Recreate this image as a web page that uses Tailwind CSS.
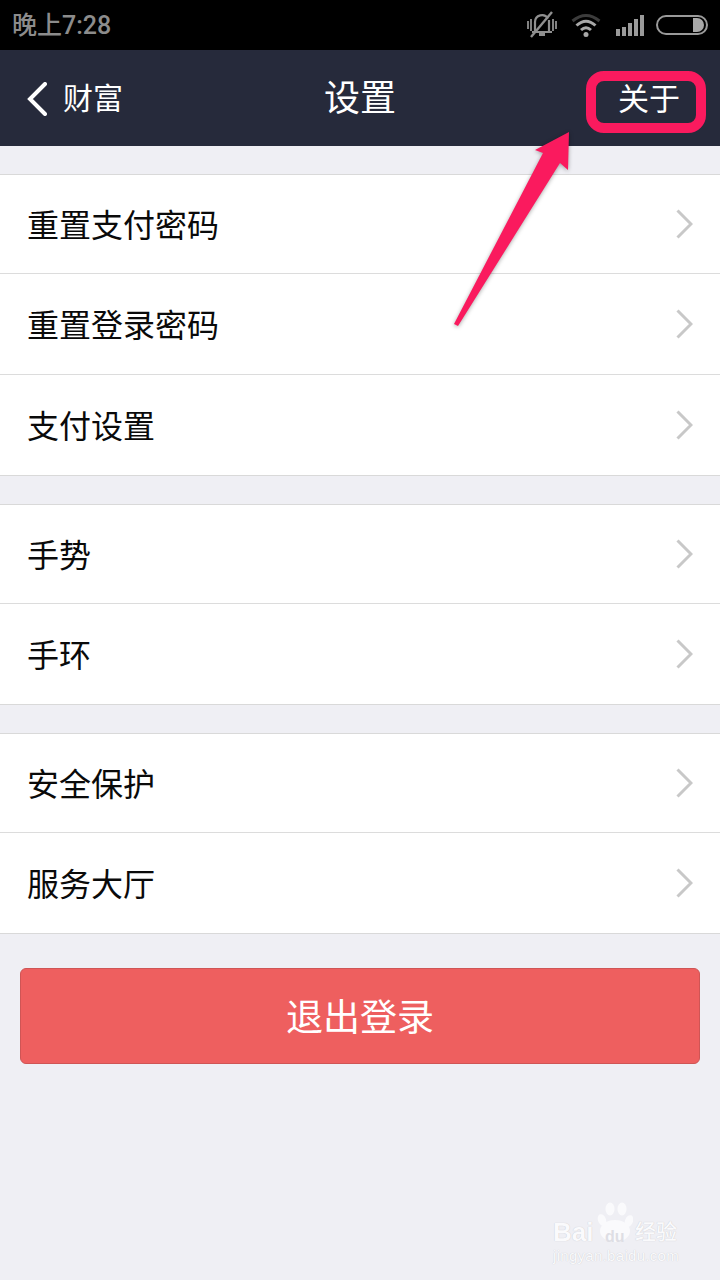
<!DOCTYPE html>
<html lang="zh-CN">
<head>
<meta charset="utf-8">
<script src="https://cdn.jsdelivr.net/npm/@tailwindcss/browser@4"></script>
</head>
<body class="m-0">
<div class="relative w-[720px] h-[1280px] overflow-hidden bg-[#efeff4] font-['Roboto','Noto_Sans_CJK_SC',sans-serif] text-[#0a0a0a]">

  <!-- status bar -->
  <div class="h-[50px] bg-black flex items-center justify-between pl-[12px] pr-[12px]">
    <span class="text-[25px] font-medium leading-none text-[#8c8c8c]">晚上7:28</span>
    <div class="flex items-center">
      <svg class="w-[30px] h-[28px] mr-[14px]" viewBox="0 0 30 28" fill="none" stroke="#8f8f8f" stroke-width="2.2">
        <path d="M8 20 V11 a7 7 0 0 1 13-3.500 M22 9 V20 M5 21 H25" />
        <path d="M12 23.500 h6" stroke-width="3" />
        <path d="M4 26 L25 1" stroke-width="2.400" />
        <path d="M1 10 v8 M4 8 v12 M26 8 v12 M29 10 v8" stroke-width="1.800" />
      </svg>
      <svg class="w-[30px] h-[25px] mr-[15px]" viewBox="0 0 30 25" fill="none" stroke-width="3">
        <path d="M1.500 8 Q15 -3 28.500 8" stroke="#3c3c3c" />
        <path d="M5.500 12.500 Q15 4 24.500 12.500" stroke="#a8a8a8" />
        <path d="M10 17 Q15 12.500 20 17" stroke="#a8a8a8" />
        <circle cx="15" cy="21.500" r="2.500" fill="#a8a8a8" stroke="none" />
      </svg>
      <div class="flex items-end gap-[2px] h-[22px] mr-[12px]">
        <div class="w-[4px] h-[7px] bg-[#9a9a9a]"></div>
        <div class="w-[4px] h-[9px] bg-[#9a9a9a]"></div>
        <div class="w-[4px] h-[13px] bg-[#9a9a9a]"></div>
        <div class="w-[4px] h-[17px] bg-[#9a9a9a]"></div>
        <div class="w-[4px] h-[21px] bg-[#9a9a9a]"></div>
      </div>
      <div class="w-[52px] h-[20px] rounded-full border-[2px] border-[#9a9a9a] flex justify-end items-center pr-[2px]">
        <div class="w-[11px] h-[14px] bg-[#a8a8a8] rounded-r-full"></div>
      </div>
    </div>
  </div>

  <!-- nav -->
  <div class="relative h-[96px] bg-[#262a3b] flex items-center justify-between pl-[27px] pr-[40px] pt-[2px] text-white">
    <div class="flex items-center">
      <svg class="w-[20px] h-[34px] mr-[16px]" viewBox="0 0 20 34" fill="none" stroke="#fff" stroke-width="4" stroke-linecap="round" stroke-linejoin="miter">
        <path d="M18 2 L3 17 L18 32" />
      </svg>
      <span class="text-[30px] leading-none font-normal">财富</span>
    </div>
    <span class="absolute left-0 right-0 text-center text-[36px] leading-none font-normal">设置</span>
    <span class="text-[31px] leading-none font-normal">关于</span>
  </div>

  <!-- group 1 -->
  <div class="mt-[28px] bg-white border-y border-[#d9d9d9]">
    <div class="h-[99px] flex items-center justify-between pl-[27px] pr-[27px] border-b border-[#dcdcdc]">
      <span class="text-[32px] leading-none pt-[4px]">重置支付密码</span>
      <svg class="w-[17px] h-[30px]" viewBox="0 0 17 30" fill="none" stroke="#c8c8c8" stroke-width="3"><path d="M1.500 1.500 L15 15 L1.500 28.500" /></svg>
    </div>
    <div class="h-[101px] flex items-center justify-between pl-[27px] pr-[27px] border-b border-[#dcdcdc]">
      <span class="text-[32px] leading-none pt-[4px]">重置登录密码</span>
      <svg class="w-[17px] h-[30px]" viewBox="0 0 17 30" fill="none" stroke="#c8c8c8" stroke-width="3"><path d="M1.500 1.500 L15 15 L1.500 28.500" /></svg>
    </div>
    <div class="h-[100px] flex items-center justify-between pl-[27px] pr-[27px]">
      <span class="text-[32px] leading-none pt-[4px]">支付设置</span>
      <svg class="w-[17px] h-[30px]" viewBox="0 0 17 30" fill="none" stroke="#c8c8c8" stroke-width="3"><path d="M1.500 1.500 L15 15 L1.500 28.500" /></svg>
    </div>
  </div>

  <!-- group 2 -->
  <div class="mt-[28px] bg-white border-y border-[#d9d9d9]">
    <div class="h-[99px] flex items-center justify-between pl-[27px] pr-[27px] border-b border-[#dcdcdc]">
      <span class="text-[32px] leading-none pt-[4px]">手势</span>
      <svg class="w-[17px] h-[30px]" viewBox="0 0 17 30" fill="none" stroke="#c8c8c8" stroke-width="3"><path d="M1.500 1.500 L15 15 L1.500 28.500" /></svg>
    </div>
    <div class="h-[100px] flex items-center justify-between pl-[27px] pr-[27px]">
      <span class="text-[32px] leading-none pt-[4px]">手环</span>
      <svg class="w-[17px] h-[30px]" viewBox="0 0 17 30" fill="none" stroke="#c8c8c8" stroke-width="3"><path d="M1.500 1.500 L15 15 L1.500 28.500" /></svg>
    </div>
  </div>

  <!-- group 3 -->
  <div class="mt-[28px] bg-white border-y border-[#d9d9d9]">
    <div class="h-[99px] flex items-center justify-between pl-[27px] pr-[27px] border-b border-[#dcdcdc]">
      <span class="text-[32px] leading-none pt-[4px]">安全保护</span>
      <svg class="w-[17px] h-[30px]" viewBox="0 0 17 30" fill="none" stroke="#c8c8c8" stroke-width="3"><path d="M1.500 1.500 L15 15 L1.500 28.500" /></svg>
    </div>
    <div class="h-[100px] flex items-center justify-between pl-[27px] pr-[27px]">
      <span class="text-[32px] leading-none pt-[4px]">服务大厅</span>
      <svg class="w-[17px] h-[30px]" viewBox="0 0 17 30" fill="none" stroke="#c8c8c8" stroke-width="3"><path d="M1.500 1.500 L15 15 L1.500 28.500" /></svg>
    </div>
  </div>

  <!-- logout -->
  <div class="mt-[34px] mx-[20px] h-[96px] pt-[5px] rounded-[6px] bg-[#ee5f5f] border border-[#cf5555] flex items-center justify-center text-white text-[37px] font-normal leading-none">退出登录</div>

  <!-- annotation: box + arrow -->
  <div class="absolute left-[586px] top-[71px] w-[120px] h-[62px] rounded-[18px] border-[10px] border-[#fa1a5e]"></div>
  <svg class="absolute left-0 top-0 w-[720px] h-[340px] drop-shadow-[0_1px_2px_rgba(0,0,0,0.35)]" viewBox="0 0 720 340">
    <polygon points="569,132 568,170 560,163 458,326 454,324 543,153 535,150" fill="#fa1a5e" />
  </svg>

  <!-- watermark -->
  <div class="absolute left-[552px] top-[1200px] w-[140px] h-[70px]">
    <svg class="absolute left-[45px] top-[2px] w-[36px] h-[41px]" viewBox="0 0 36 41" fill="#fafafc">
      <ellipse cx="5" cy="18" rx="4" ry="6" transform="rotate(-20 5 18)" />
      <ellipse cx="13" cy="7" rx="4.500" ry="6.500" />
      <ellipse cx="25" cy="7" rx="4.500" ry="6.500" />
      <ellipse cx="32" cy="19" rx="4" ry="6" transform="rotate(20 32 19)" />
      <ellipse cx="18" cy="29" rx="15" ry="11" />
    </svg>
    <span class="absolute left-[1px] top-[19px] text-[26px] font-bold leading-none text-[#fafafc] [text-shadow:0_0_1px_rgba(0,0,0,0.2)] font-['Liberation_Sans',sans-serif]">Bai</span>
    <span class="absolute left-[53px] top-[29px] text-[16px] font-bold leading-none text-[#dedee4] font-['Liberation_Sans',sans-serif]">du</span>
    <span class="absolute left-[83px] top-[22px] text-[21px] font-medium leading-none text-[#fafafc] [text-shadow:0_0_1px_rgba(0,0,0,0.2)]">经验</span>
    <span class="absolute left-[1px] top-[48px] text-[15px] leading-none tracking-[0.3px] text-[#fafafc] [text-shadow:0_0_1px_rgba(0,0,0,0.2)] font-['Liberation_Sans',sans-serif]">jingyan.baidu.com</span>
  </div>
</div>
</body>
</html>
